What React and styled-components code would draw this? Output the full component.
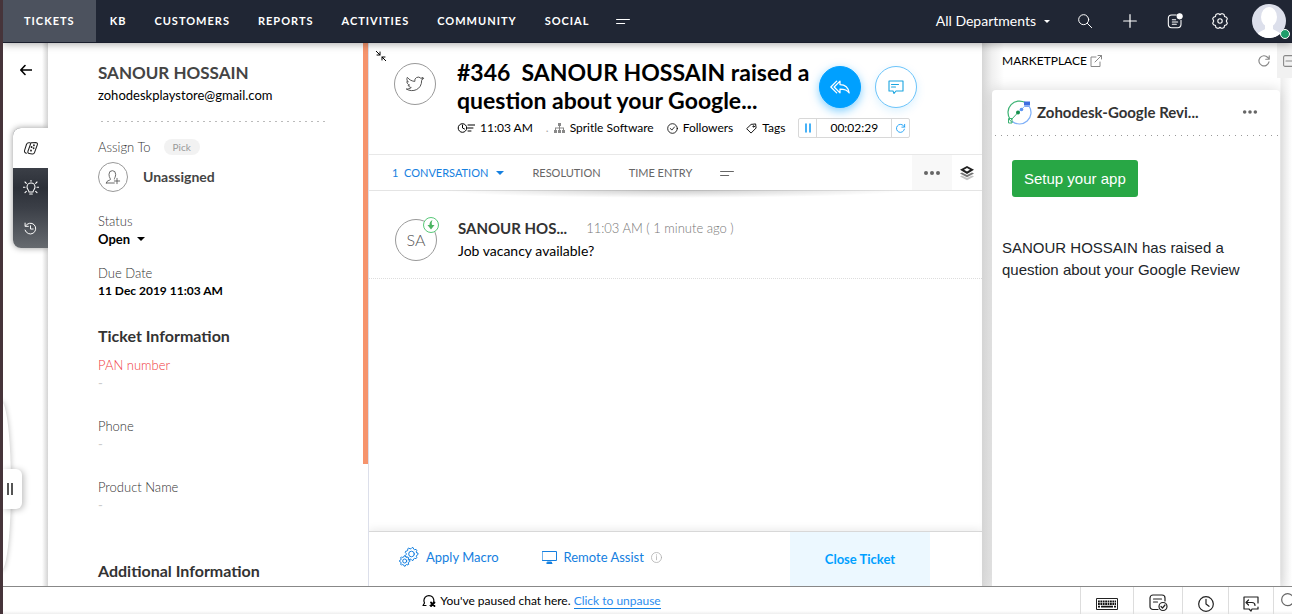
import React from "react";
import styled, { createGlobalStyle, css } from "styled-components";

const ticketFields = ["PAN number", "Phone", "Product Name"];
const modules = ["KB", "CUSTOMERS", "REPORTS", "ACTIVITIES", "COMMUNITY", "SOCIAL"];

const Icon = ({ size = 16, box = 24, width = 1.5, children, ...rest }) => (
  <svg
    width={size}
    height={size}
    viewBox={`0 0 ${box} ${box}`}
    fill="none"
    stroke="currentColor"
    strokeWidth={width}
    strokeLinecap="round"
    strokeLinejoin="round"
    aria-hidden="true"
    {...rest}
  >
    {children}
  </svg>
);

const MoreLines = () => (
  <Icon size={14} box={14} width={1.2}>
    <path d="M.6 5.500h12.800M.6 9.500h8" />
  </Icon>
);

const Refresh = ({ size }) => (
  <Icon size={size} width={2}>
    <path d="M20.5 13.5A8.7 8.7 0 1 1 18.500 6L21 8.500M21 3v6h-6" />
  </Icon>
);

const gearPath = (teeth, outer, inner, cx, cy) => {
  const points = [];
  for (let i = 0; i < teeth * 4; i++) {
    const radius = i % 4 < 2 ? outer : inner;
    const angle = ((i - 0.5) / (teeth * 4)) * Math.PI * 2;
    points.push(`${(cx + radius * Math.cos(angle)).toFixed(2)} ${(cy + radius * Math.sin(angle)).toFixed(2)}`);
  }
  return `M${points.join("L")}Z`;
};

function TopBar() {
  return (
    <Header>
      <Nav>
        <NavLink href="#tickets" $active>TICKETS</NavLink>
        {modules.map((name) => (
          <NavLink key={name} href={`#${name.toLowerCase()}`}>{name}</NavLink>
        ))}
        <IconButton $w={40} aria-label="More modules"><MoreLines /></IconButton>
      </Nav>
      <Tools>
        <Departments>All Departments <Caret $size={3} /></Departments>
        <IconButton aria-label="Search">
          <Icon size={16}><circle cx="10" cy="10" r="7.500" /><path d="M15.500 15.500L22 22" /></Icon>
        </IconButton>
        <IconButton aria-label="Add">
          <Icon size={16} width={1.8}><path d="M12 2.500v19M2.500 12h19" /></Icon>
        </IconButton>
        <IconButton aria-label="Feeds">
          <Icon size={16} width={1.6}>
            <path d="M14 3H7a5 5 0 0 0-5 5v9a5 5 0 0 0 5 5h9a5 5 0 0 0 5-5v-6M8 10h5M8 13.500h8M8 17h6" />
            <circle cx="19" cy="5" r="3.800" fill="#fff" />
          </Icon>
        </IconButton>
        <IconButton aria-label="Settings">
          <Icon size={16} box={16} width={1.1}>
            <path d="M5.500.7h1.200L8 1.700 9.300.7h1.200l1.600.8.4 2 2 .7.800 1.600-1 2.200 1 2.200-.8 1.600-2 .7-.4 2-1.600.8H9.300L8 14.300l-1.300 1H5.500l-1.600-.8-.4-2-2-.7-.8-1.600 1-2.200-1-2.200.8-1.600 2-.7.4-2z" />
            <circle cx="8" cy="8" r="2.200" />
          </Icon>
        </IconButton>
        <ProfileButton aria-label="Profile">
          <svg width="34" height="34" viewBox="0 0 34 34" aria-hidden="true">
            <clipPath id="round"><circle cx="17" cy="17" r="17" /></clipPath>
            <g clipPath="url(#round)">
              <rect width="34" height="34" fill="#dcdfeb" />
              <ellipse cx="17" cy="13" rx="8" ry="10" fill="#fff" />
              <path d="M13 20h8v5c2 2 8 2 9 9H4c1-7 7-7 9-9z" fill="#fff" />
            </g>
          </svg>
          <Online />
        </ProfileButton>
      </Tools>
    </Header>
  );
}

function Details() {
  return (
    <DetailPane>
      <Customer>SANOUR HOSSAIN</Customer>
      <Email>zohodeskplaystore@gmail.com</Email>
      <Dashes />
      <AssignRow>
        <Label>Assign To</Label>
        <Pick>Pick</Pick>
      </AssignRow>
      <Assignee>
        <Circle $size={30}>
          <Icon size={16} width={1.3}>
            <path d="M2 21c0-4 5-3.500 6-5 .8-1.500-2-3-2-8a5 5.500 0 0 1 10 0c0 4-2 5.500-2 7M2 21h12M18 14v8M14 18h8" />
          </Icon>
        </Circle>
        Unassigned
      </Assignee>
      <Label>Status</Label>
      <StatusButton>Open <Caret /></StatusButton>
      <Label>Due Date</Label>
      <Value>11 Dec 2019 11:03 AM</Value>
      <SectionTitle>Ticket Information</SectionTitle>
      {ticketFields.map((name, index) => (
        <Field key={name}>
          <Label $required={index === 0}>{name}</Label>
          <Empty>-</Empty>
        </Field>
      ))}
      <SectionTitle>Additional Information</SectionTitle>
      <ScrollThumb />
    </DetailPane>
  );
}

function Ticket() {
  return (
    <TicketPane>
      <TicketHeader>
        <Collapse aria-label="Collapse">
          <Icon size={10} box={10} width={1}><path d="M0 0l4 4M1 4h3V1M10 10L6 6M6 9V6h3" /></Icon>
        </Collapse>
        <Circle $size={42}>
          <Icon size={20} width={1.2}>
            <path d="M22 5.500c-.8.400-1.400.5-2 .6.800-.5 1.300-1 1.600-2-.8.500-1.700.8-2.600 1a4.200 4.200 0 0 0-7.200 3.800C8.500 8.700 5 7 2.800 4c-1 2-.6 4.200 1.200 5.600-.6 0-1.200-.2-1.800-.5 0 2 1.400 3.700 3.300 4.100-.6.200-1.200.2-1.800.1.500 1.600 2 2.800 3.800 2.900C6 17.500 4 18.300 1.500 18 9 22.600 20.200 19 20 7.600c.8-.6 1.500-1.300 2-2.100z" />
          </Icon>
        </Circle>
        <Heading>
          <Title>#346&nbsp; SANOUR HOSSAIN raised a question about your Google...</Title>
          <Meta>
            <MetaItem>
              <Icon size={18} box={18} width={1}>
                <circle cx="5.500" cy="9" r="4.300" /><path d="M5.500 6v3l2 1M11 6h7M11 9h5M11 12h3" />
              </Icon>
              11:03 AM
            </MetaItem>
            <MetaItem>
              <Separator>.</Separator>
              <svg width="11" height="10" viewBox="0 0 11 10" fill="#888" aria-hidden="true">
                <path d="M4 0h3v3H6v1.500h4V7h1v3H8V7h1V5.500H6V7h1v3H4V7h1V5.500H2V7h1v3H0V7h1V4.500h4V3H4z" />
              </svg>
              Spritle Software
            </MetaItem>
            <MetaItem>
              <Icon size={11} width={1.8}><circle cx="12" cy="12" r="10.500" /><path d="M7.500 12l3 3.500 6-7" /></Icon>
              Followers
            </MetaItem>
            <MetaItem>
              <Icon size={11} width={2}><path d="M12 3l9-1 1 9-11 11-9-9z" /><circle cx="16.500" cy="7.500" r="1.500" /></Icon>
              Tags
            </MetaItem>
            <Timer>
              <TimerButton aria-label="Pause timer">
                <Icon size={10} box={10} width={1.6}><path d="M3 1v8M7 1v8" /></Icon>
              </TimerButton>
              <time>00:02:29</time>
              <TimerButton aria-label="Reset timer"><Refresh size={11} /></TimerButton>
            </Timer>
          </Meta>
        </Heading>
        <Actions>
          <RoundButton $filled aria-label="Reply all">
            <Icon size={20} width={1.5}>
              <path d="M12 5v4c6 0 10 3 11 10-2-3-6-4.500-11-4.500V19l-7-7zM8 5l-7 7 7 7" />
            </Icon>
          </RoundButton>
          <RoundButton aria-label="Comment">
            <Icon size={16} box={16} width={1.1}>
              <path d="M1 2h14v10H8l-2 2.500L5 12H1zM3.500 5.500h7M3.500 8h4" />
            </Icon>
          </RoundButton>
        </Actions>
      </TicketHeader>
      <Tabs>
        <Tab $active>1&nbsp; CONVERSATION <Caret /></Tab>
        <Tab>RESOLUTION</Tab>
        <Tab>TIME ENTRY</Tab>
        <Tab aria-label="More tabs"><MoreLines /></Tab>
        <TabTools>
          <MoreButton aria-label="More actions"><Dots size={18} /></MoreButton>
          <LayersButton aria-label="Layers">
            <svg width="16" height="16" viewBox="0 0 16 16" aria-hidden="true">
              <path d="M1 11.500l7 3.800 7-3.800-2-1L8 13l-5-2.500z" fill="#c4c4c4" />
              <path d="M1 8.500l7 3.800 7-3.800-2-1L8 10 3 7.500z" fill="#777" />
              <path d="M8 1l7 3.800L8 9 1 4.800zM8 3L5 4.800 8 6.600l3-1.800z" fill="#222" fillRule="evenodd" />
            </svg>
          </LayersButton>
        </TabTools>
      </Tabs>
      <Message>
        <Circle $size={42}>
          SA
          <Incoming>
            <svg width="10" height="10" viewBox="0 0 10 10" fill="#4bb462" aria-hidden="true">
              <path d="M6.500 0C4 1 3.500 3 3.500 5H1.500L5 9.500 8.500 5H6c-.5-2-.3-3 .5-5z" />
            </svg>
          </Incoming>
        </Circle>
        <div>
          <Sender>
            SANOUR HOS... <Sent>11:03 AM ( 1 minute ago )</Sent>
          </Sender>
          <Body>Job vacancy available?</Body>
        </div>
      </Message>
      <ActionBar>
        <BarButton>
          <Icon size={20} box={20} width={1}>
            <path d={gearPath(9, 6.5, 5.3, 12.5, 7)} /><circle cx="12.500" cy="7" r="2.800" />
            <path d={gearPath(8, 5.2, 4, 5.700, 14)} fill="#fff" /><circle cx="5.700" cy="14" r="2" />
          </Icon>
          Apply Macro
        </BarButton>
        <BarButton>
          <Icon size={15} box={15} width={1}>
            <path d="M.5 1.500h14v9H.5zM5 13.500h5" /><path d="M5.500 12h4v1.500h-4z" fill="currentColor" />
          </Icon>
          <span>Remote Assist</span>
          <Info>
            <Icon size={11} width={1.6}><circle cx="12" cy="12" r="11" /><path d="M12 10v7M12 6v1" /></Icon>
          </Info>
        </BarButton>
        <CloseTicket>Close Ticket</CloseTicket>
      </ActionBar>
    </TicketPane>
  );
}

const Dots = ({ size }) => (
  <svg width={size} height={size} viewBox="0 0 18 18" fill="#666" aria-hidden="true">
    <circle cx="3" cy="9" r="2" /><circle cx="9" cy="9" r="2" /><circle cx="15" cy="9" r="2" />
  </svg>
);

function Marketplace() {
  return (
    <Side>
      <SideHeader>
        <SideTitle href="#marketplace">
          MARKETPLACE
          <Icon size={12} box={12} width={1}><path d="M6 2H1v9.500h9V7M5 7l6.500-6.500M8 .5h3.500V4" /></Icon>
        </SideTitle>
        <IconButton $w={26} aria-label="Refresh"><Refresh size={14} /></IconButton>
        <Minimise aria-label="Collapse panel">
          <Icon size={12} box={12} width={1.1}><rect x=".6" y=".6" width="10.800" height="10.800" rx="1.500" /><path d="M3 6h6" /></Icon>
        </Minimise>
      </SideHeader>
      <Card>
        <CardHeader>
          <svg width="25" height="25" viewBox="0 0 25 25" fill="none" aria-hidden="true">
            <path d="M18.300 2.600A11.500 11.500 0 0 0 3 19" stroke="#3bb273" strokeWidth="1.200" />
            <path d="M22 6A11.500 11.500 0 0 1 5 21.200" stroke="#7fb0f8" strokeWidth="1.200" />
            <path d="M4 20l7-7.500" stroke="#3bb273" />
            <path d="M11 12.500L18 6" stroke="#8db8f8" />
            <circle cx="14.500" cy="9.500" r="1.800" fill="#5d94f2" />
            <circle cx="11" cy="12.500" r="2" fill="#168f4c" />
            <path d="M17 1.500h6v4h-6z" fill="#3f6fe0" />
            <path d="M18 5.500h4v1.500h-4z" fill="#7fa6f4" />
            <path d="M1.500 18.500h3.500v4.500H1.500zM2 19l3 3.500" stroke="#3bb273" />
          </svg>
          <CardTitle>Zohodesk-Google Revi...</CardTitle>
          <IconButton aria-label="App options"><Dots size={16} /></IconButton>
        </CardHeader>
        <CardBody>
          <SetupButton>Setup your app</SetupButton>
          <p>SANOUR HOSSAIN has raised a question about your Google Review</p>
        </CardBody>
      </Card>
    </Side>
  );
}

function Footer() {
  return (
    <Bottom>
      <Chat>
        <Icon size={14} box={14} width={1.2}>
          <path d="M8 11.500A5 5 0 1 0 2.500 9L1 11.500h3" /><path d="M9 8.500l3.500 3.500M12.500 8.500L9 12" strokeWidth="1.800" />
        </Icon>
        <span>You've paused chat here. <a href="#unpause">Click to unpause</a></span>
      </Chat>
      <DockButton $w={53} aria-label="Keyboard shortcuts">
        <svg width="22" height="12" viewBox="0 0 22 12" aria-hidden="true">
          <path d="M.5.500h21v11H.5z" fill="none" stroke="#222" />
          <path d="M2 3.500h18M2 6h18" stroke="#111" strokeWidth="1.800" strokeDasharray="1.800 .6" />
          <path d="M2 8.600h2M5 8.600h12M18 8.600h2" stroke="#111" strokeWidth="1.800" />
        </svg>
      </DockButton>
      <DockButton $w={49} aria-label="Tasks">
        <Icon size={19} box={19} width={1.2}>
          <path d="M9 15.500H4a3 3 0 0 1-3-3V4a3 3 0 0 1 3-3h9a3 3 0 0 1 3 3v3M4.500 5h8M4.500 8h4" />
          <circle cx="14" cy="12.500" r="4" /><path d="M12 12.500l1.500 1.500 2.500-3" />
        </Icon>
      </DockButton>
      <DockButton $w={46} aria-label="Recent">
        <Icon size={16} width={1.8}><circle cx="12" cy="12" r="11" /><path d="M12 5v7l4.500 3.500" /></Icon>
      </DockButton>
      <DockButton $w={45} aria-label="Replies">
        <Icon size={16} box={16} width={1.2}><path d="M15 7V1H1v12h5l2 2 1-2h6v-2M5.500 4L3 6.500 5.500 9M3 6.500h6c2 0 3 1 3 3" /></Icon>
      </DockButton>
      <DockSearch $w={19} aria-label="Search">
        <Icon size={16} width={1.8}><circle cx="10" cy="10" r="9" /><path d="M17 17l5 5" /></Icon>
      </DockSearch>
    </Bottom>
  );
}

export default function App() {
  return (
    <Page>
      <GlobalStyle />
      <TopBar />
      <Main>
        <Rail>
          <BackButton aria-label="Back">
            <Icon size={12} box={12} width={1.6}><path d="M11.500 6H1M5 1.500L.8 6 5 10.500" /></Icon>
          </BackButton>
          <RailTabs>
            <RailTab aria-label="Ticket properties">
              <Icon size={14} width={1.8}>
                <path d="M12 3l8-.5c2 0 3.500 1.500 3 3.500l-5 14c-.7 2-2 2.500-4 2.200l-5-.7c-2-.3-3-2-2.200-4zM10 3H8C6 3 5 4 4.200 6L1 16c-.7 2 0 4 3 5" />
                <path d="M17 7v.5M13 10v.5M16.500 12v.5M12 16v.5" strokeWidth="3" />
              </Icon>
            </RailTab>
            <RailTab $dark aria-label="Suggestions">
              <Icon size={16} width={1.6}>
                <path d="M9 18c0-3-3-4-3-7.500a6 6 0 0 1 12 0c0 3.500-3 4.500-3 7.500zM10 21h4M12 0v2M3 3l2 2M21 3l-2 2M0 11h3M21 11h3M3 19l2-2M21 19l-2-2" />
              </Icon>
            </RailTab>
            <RailTab $dark aria-label="History">
              <Icon size={13} width={1.8}><path d="M3 7a10 10 0 1 1-1 8M2 2v6h6M12 7v6h5" /></Icon>
            </RailTab>
          </RailTabs>
          <Curve />
          <Handle aria-label="Resize panel">
            <Icon size={12} box={12} width={2} strokeLinecap="butt"><path d="M4 0v12M8 0v12" /></Icon>
          </Handle>
        </Rail>
        <Details />
        <Ticket />
        <Marketplace />
      </Main>
      <Footer />
    </Page>
  );
}

// Styled Components

const GlobalStyle = createGlobalStyle`
  * { box-sizing: border-box; }
  body {
    margin: 0;
    color: #000;
    font-family: Lato, "Open Sans", sans-serif;
    font-size: 13px;
    line-height: 18px;
  }
  button {
    padding: 0;
    border: 0;
    background: none;
    color: inherit;
    font: inherit;
    cursor: pointer;
  }
  h1, h2, h3, p { margin: 0; }
  svg { display: block; flex: none; }
`

const center = css`
  display: flex;
  align-items: center;
  justify-content: center;
`

const Page = styled.div`
  display: flex;
  flex-direction: column;
  height: 100vh;
  border-left: 3px solid #46343a;
  overflow: hidden;
  background: #fff;
`

const Header = styled.header`
  position: relative;
  z-index: 3;
  display: flex;
  justify-content: space-between;
  flex: none;
  height: 43px;
  border-bottom: 1px solid #191d2c;
  background: #202634;
  color: #fff;
  box-shadow: 0 1px 8px rgba(0, 0, 0, 0.35);
`

const Nav = styled.nav`
  display: flex;
  align-items: center;
`

const NavLink = styled.a`
  ${center}
  height: 42px;
  padding: 0 ${(props) => (props.$active ? 21 : 14)}px;
  background: ${(props) => (props.$active ? "#4c525e" : "none")};
  color: #fff;
  font-size: 11px;
  font-weight: 700;
  letter-spacing: 1px;
  text-decoration: none;
`

const Tools = styled.div`
  display: flex;
  align-items: center;
  gap: 11px;
  padding-right: 6px;
`

const IconButton = styled.button`
  ${center}
  width: ${(props) => props.$w || 34}px;
  height: 34px;
`

const Departments = styled.button`
  display: flex;
  align-items: center;
  gap: 8px;
  padding-right: 7px;
  font-size: 14px;
`

const Caret = styled.span`
  border: ${(props) => props.$size || 4}px solid transparent;
  border-top-color: currentColor;
  border-bottom: 0;
`

const ProfileButton = styled.button`
  position: relative;
  margin-left: 4px;
`

const Online = styled.span`
  position: absolute;
  right: -4px;
  bottom: -1px;
  width: 10px;
  height: 10px;
  border: 1px solid #fff;
  border-radius: 50%;
  background: #1f9d6b;
`

const Main = styled.main`
  display: flex;
  flex: 1;
  min-height: 0;
`

const Rail = styled.aside`
  position: relative;
  flex: none;
  width: 45px;
  background: linear-gradient(90deg, #fff 39px, #d4d4d4);
`

const BackButton = styled.button`
  ${center}
  width: 45px;
  height: 54px;
`

const RailTabs = styled.div`
  margin: 31px 0 0 10px;
  border-radius: 8px 0 0 8px;
  overflow: hidden;
  background: linear-gradient(#3b3f47 40px, #2c3038 60px, #3b3f47 80px, #666a6f);
  box-shadow: 0 0 6px rgba(0, 0, 0, 0.4);
`

const RailTab = styled.button`
  ${center}
  width: 100%;
  height: 40px;
  background: ${(props) => (props.$dark ? "none" : "#fff")};
  color: ${(props) => (props.$dark ? "#fff" : "#222")};
`

const Curve = styled.div`
  position: absolute;
  top: 358px;
  left: -12px;
  width: 20px;
  height: 170px;
  border-radius: 50%;
  background: #fff;
  box-shadow: 1px 0 5px rgba(0, 0, 0, 0.2);
  clip-path: inset(-10px -10px -10px 12px);
`

const Handle = styled.button`
  ${center}
  position: absolute;
  top: 426px;
  left: 0;
  width: 19px;
  height: 40px;
  padding-right: 6px;
  border-radius: 0 6px 6px 0;
  background: #fff;
  color: #555;
  box-shadow: 2px 1px 6px rgba(0, 0, 0, 0.25);
`

const DetailPane = styled.section`
  position: relative;
  flex: none;
  width: 321px;
  padding: 20px 42px 0 50px;
  border-right: 1px solid #dcdfea;
  overflow: hidden;
  background: #fff;
`

const Customer = styled.h2`
  color: #444;
  font-size: 17px;
  font-weight: 700;
  line-height: 20px;
`

const Email = styled.p`
  margin-top: 3px;
`

const Dashes = styled.div`
  height: 1px;
  margin: 17px 0 16px 3px;
  background: repeating-linear-gradient(90deg, #bbb 0 2px, transparent 2px 6px);
`

const AssignRow = styled.div`
  display: flex;
  align-items: center;
  gap: 13px;
`

const Label = styled.div`
  color: ${(props) => (props.$required ? "#f0383e" : "#333")};
  font-weight: 300;
`

const Pick = styled.button`
  height: 16px;
  padding: 0 9px;
  border-radius: 8px;
  background: #f2f2f2;
  color: #999;
  font-size: 10px;
  line-height: 16px;
`

const Assignee = styled.div`
  display: flex;
  align-items: center;
  gap: 15px;
  margin: 6px 0 20px;
  color: #444;
  font-size: 14px;
  font-weight: 700;
`

const Circle = styled.div`
  ${center}
  position: relative;
  flex: none;
  width: ${(props) => props.$size}px;
  height: ${(props) => props.$size}px;
  border: 1px solid #999;
  border-radius: 50%;
  color: #555;
  font-size: 16px;
  font-weight: 300;
`

const StatusButton = styled.button`
  display: flex;
  align-items: center;
  gap: 7px;
  margin-bottom: 16px;
  font-weight: 700;
`

const Value = styled.p`
  margin-bottom: 26px;
  font-size: 12px;
  font-weight: 700;
`

const SectionTitle = styled.h3`
  margin-bottom: 10px;
  color: #333;
  font-size: 16px;
  font-weight: 700;
  line-height: 20px;
`

const Field = styled.div`
  height: 61px;

  &:nth-last-child(3) {
    height: 83px;
  }
`

const Empty = styled.div`
  color: #ccc;
`

const ScrollThumb = styled.div`
  position: absolute;
  top: 0;
  right: 0;
  width: 5px;
  height: 421px;
  background: #f6946d;
`

const TicketPane = styled.section`
  display: flex;
  flex-direction: column;
  flex: 1;
  min-width: 0;
  background: #fff;
`

const TicketHeader = styled.div`
  position: relative;
  display: flex;
  height: 112px;
  padding: 20px 25px 0;
  border-bottom: 1px solid #e8e8e8;
`

const Collapse = styled.button`
  position: absolute;
  top: 8px;
  left: 7px;
`

const Heading = styled.div`
  flex: 1;
  min-width: 0;
  margin: -5px 0 0 21px;
`

const Title = styled.h1`
  max-width: 360px;
  font-size: 23px;
  font-weight: 700;
  line-height: 28px;
`

const Meta = styled.div`
  display: flex;
  align-items: center;
  gap: 13px;
  margin-top: 4px;
  font-size: 12px;
  white-space: nowrap;
`

const MetaItem = styled.span`
  display: flex;
  align-items: center;
  gap: 5px;
`

const Separator = styled.span`
  color: #aaa;
`

const Timer = styled.div`
  display: flex;
  align-items: center;
  height: 20px;
  border: 1px solid #d8d8d8;
  border-radius: 2px;

  time {
    padding: 0 13px;
    border: solid #d8d8d8;
    border-width: 0 1px;
  }
`

const TimerButton = styled.button`
  ${center}
  width: 17px;
  height: 18px;
  color: #1a9ff5;
`

const Actions = styled.div`
  position: absolute;
  top: 23px;
  right: 65px;
  display: flex;
  gap: 14px;
`

const RoundButton = styled.button`
  ${center}
  width: 42px;
  height: 42px;
  border: 1px solid ${(props) => (props.$filled ? "#00a0ff" : "#6cc4fa")};
  border-radius: 50%;
  background: ${(props) => (props.$filled ? "#00a0ff" : "#fff")};
  color: ${(props) => (props.$filled ? "#fff" : "#1ba5e0")};
  box-shadow: 0 3px 10px rgba(0, 160, 255, ${(props) => (props.$filled ? 0.5 : 0.15)});
`

const Tabs = styled.div`
  position: relative;
  display: flex;
  align-items: center;
  gap: 28px;
  height: 36px;
  padding-left: 23px;
  border-bottom: 1px solid #e4e4e4;
  background: #fff;

  &::after {
    content: "";
    position: absolute;
    top: 35px;
    left: 70px;
    right: 70px;
    height: 8px;
    background: radial-gradient(ellipse at top, rgba(0, 0, 0, 0.2), transparent 70%);
  }
`

const Tab = styled.button`
  display: flex;
  align-items: center;
  gap: 8px;
  color: ${(props) => (props.$active ? "#1580e0" : "#666")};
  font-size: 11px;
`

const TabTools = styled.div`
  display: flex;
  margin-left: auto;
`

const MoreButton = styled.button`
  ${center}
  width: 40px;
  height: 35px;
  background: #f8f8f8;
`

const LayersButton = styled.button`
  ${center}
  width: 30px;
  height: 35px;
`

const Message = styled.article`
  display: flex;
  gap: 21px;
  padding: 28px 26px 17px;
  border-bottom: 1px dotted #ddd;
`

const Incoming = styled.span`
  ${center}
  position: absolute;
  top: -3px;
  right: -3px;
  width: 16px;
  height: 16px;
  border: 1px solid #58c878;
  border-radius: 50%;
  background: #fff;
`

const Sender = styled.h2`
  display: flex;
  align-items: center;
  gap: 19px;
  color: #333;
  font-size: 15px;
  font-weight: 700;
`

const Sent = styled.time`
  color: #777;
  font-size: 13px;
  font-weight: 300;
`

const Body = styled.p`
  margin-top: 5px;
  font-size: 14px;
`

const ActionBar = styled.div`
  display: flex;
  align-items: center;
  height: 55px;
  margin-top: auto;
  padding: 0 52px 0 30px;
  border-top: 1px solid #d8d8d8;
  box-shadow: 0 -2px 8px rgba(0, 0, 0, 0.08);
`

const BarButton = styled.button`
  display: flex;
  align-items: center;
  gap: 7px;
  margin-right: 43px;
  padding-bottom: 4px;
  color: #1580e0;
`

const Info = styled.span`
  color: #aaa;
`

const CloseTicket = styled.button`
  ${center}
  align-self: stretch;
  width: 140px;
  margin-left: auto;
  background: #ecf8ff;
  color: #00a0ff;
  font-weight: 700;
`

const Side = styled.aside`
  display: flex;
  flex-direction: column;
  flex: none;
  width: 310px;
  padding: 0 12px 0 10px;
  background: linear-gradient(90deg, #d6d6d6, #f0f0f0 10px, #fff 22px, #fff 298px, #eee 299px, #fff);
`

const SideHeader = styled.div`
  display: flex;
  align-items: center;
  height: 35px;
  margin: 0 -12px 12px 0;
  padding-left: 10px;
  color: #888;
`

const SideTitle = styled.a`
  display: flex;
  align-items: center;
  gap: 3px;
  margin-right: auto;
  color: #000;
  font-size: 12px;
  text-decoration: none;

  svg { color: #888; }
`

const Minimise = styled.button`
  display: flex;
  align-items: center;
  width: 15px;
  height: 35px;
  padding-left: 6px;
  overflow: hidden;
  background: #f1f1f1;
`

const Card = styled.div`
  flex: 1;
  border-radius: 4px 4px 0 0;
  background: #fff;
  box-shadow: 0 0 14px rgba(0, 0, 0, 0.15);
`

const CardHeader = styled.div`
  display: flex;
  align-items: center;
  height: 46px;
  padding: 0 13px 2px 15px;
  background: repeating-linear-gradient(90deg, transparent 0 3px, #999 3px 4px, transparent 4px 6px) bottom / 100% 1px no-repeat;
`

const CardTitle = styled.h2`
  margin: 0 auto 0 5px;
  color: #333;
  font-size: 15px;
  font-weight: 700;
`

const CardBody = styled.div`
  padding: 24px 10px;
  font: 15px/22px "Liberation Sans", Arial, sans-serif;
  color: #212529;

  p { margin-top: 40px; }
`

const SetupButton = styled.button`
  height: 37px;
  margin-left: 10px;
  padding: 0 12px;
  border-radius: 3px;
  background: #28a745;
  color: #fff;
`

const Bottom = styled.footer`
  position: relative;
  z-index: 2;
  display: flex;
  flex: none;
  height: 28px;
  border-top: 1px solid #888;
  background: linear-gradient(#fff 24px, #eee);
`

const Chat = styled.div`
  ${center}
  flex: 1;
  gap: 4px;
  font-size: 12px;

  a {
    color: #2b8df0;
    text-decoration: none;
    border-bottom: 1px solid #1580e0;
  }
`

const DockButton = styled.button`
  ${center}
  flex: none;
  width: ${(props) => props.$w}px;
  padding-top: 6px;
  border-left: 1px solid #ddd;
  color: #222;
  overflow: hidden;
`

const DockSearch = styled(DockButton)`
  justify-content: flex-start;
  padding: 0 0 0 7px;
  color: #666;
`
